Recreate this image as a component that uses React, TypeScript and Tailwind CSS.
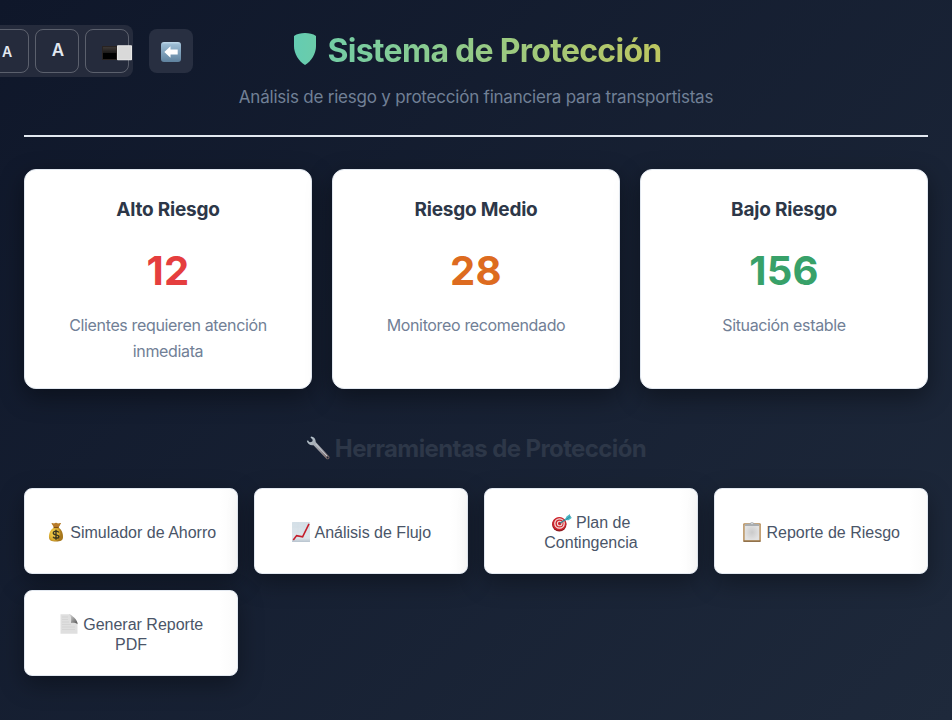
import type { ReactNode } from "react";

const SANS = "font-['Inter','Liberation_Sans',sans-serif]";

function ShieldIcon() {
  return (
    <svg className="-mt-px block h-8 w-6 shrink-0" viewBox="0 0 24 32">
      <defs>
        <linearGradient id="shield" x1="0" x2="1">
          <stop offset="0" stopColor="#64ccb2" />
          <stop offset="1" stopColor="#6bccaa" />
        </linearGradient>
      </defs>
      <path d="M1 3C4 .8 8 0 12 0s8 .8 11 3v10c0 8-5 15.500-11 19C6 28.500 1 21 1 13z" fill="url(#shield)" />
    </svg>
  );
}

function ContrastIcon() {
  return (
    <svg className="mt-[3px] ml-[16px] block h-4 w-[30px] shrink-0" viewBox="0 0 30 16">
      <defs>
        <linearGradient id="blk" x1="0" y1="0" x2="0" y2="1">
          <stop offset="0" stopColor="#3c3735" />
          <stop offset=".48" stopColor="#1c1a19" />
          <stop offset=".52" stopColor="#000" />
        </linearGradient>
      </defs>
      <rect x="0" y="1" width="15" height="14" fill="#292321" />
      <rect x="1" y="2" width="13.300" height="12" fill="url(#blk)" />
      <rect x="15" y=".3" width="15" height="15" rx=".8" fill="#eeeeed" />
      <rect x="15.600" y="1.200" width="13.800" height="13.400" fill="#d9d9d9" />
    </svg>
  );
}

function BackIcon() {
  return (
    <svg className="mt-0.5 block h-5 w-5" viewBox="0 0 20 20">
      <defs>
        <linearGradient id="back" x1="0" y1="0" x2="0" y2="1">
          <stop offset="0" stopColor="#c3dced" />
          <stop offset=".13" stopColor="#9bbbd3" />
          <stop offset="1" stopColor="#5f829e" />
        </linearGradient>
      </defs>
      <rect width="20" height="20" rx="3" fill="url(#back)" />
      <path d="M3.300 10 9.500 4.300v3.200h7.200v5H9.500v3.200z" fill="#fff" />
    </svg>
  );
}

function WrenchIcon() {
  return (
    <svg className="-mt-[3px] block h-6 w-6 shrink-0" viewBox="0 0 24 24">
      <defs>
        <linearGradient id="steel" x1="0" y1="0" x2="1" y2="1">
          <stop offset="0" stopColor="#b9cad4" />
          <stop offset=".6" stopColor="#98969d" />
          <stop offset="1" stopColor="#75625f" />
        </linearGradient>
      </defs>
      <path
        d="M5 .5C8 .8 9.900 3 9.700 6L23 20.300c1.600 1.800-.9 4-2.500 2.600L7.500 9.200C4.500 9.900 1.400 8 .8 4.800l1.400-.4c.5 1.500 1.600 2 2.900 1.700 1.500-.5 2-1.900 1.100-3.200L4.600 1.700z"
        fill="url(#steel)"
      />
      <path d="m9.500 7.800 11.700 12.400" stroke="#ccd5dc" strokeWidth=".9" />
      <circle cx="21.600" cy="21.500" r=".9" fill="#171f31" />
    </svg>
  );
}

function MoneyIcon() {
  return (
    <svg className="-my-1 inline-block h-5 w-5 align-[0px]" viewBox="0 0 20 20">
      <defs>
        <radialGradient id="bag" cx=".35" cy=".55">
          <stop offset="0" stopColor="#f6d654" />
          <stop offset=".7" stopColor="#dcae31" />
          <stop offset="1" stopColor="#a7771d" />
        </radialGradient>
      </defs>
      <path d="M5.500 1 8 1.700 10 .8l2 1 3-.8-2.500 4.500c3.500 2.200 4.800 6.500 4.500 10-.2 3-2.500 4-7 4s-6.800-1-7-4C2.800 12 4 7.700 8 5.500z" fill="url(#bag)" />
      <path d="M5.500 1 8 1.700 10 .8l2 1 3-.8-2.500 4.200H8z" fill="#b87b2a" />
      <path d="M7.600 5.500h5" stroke="#805019" strokeWidth="1.200" />
      <path d="M12.800 10.500c-.5-1-1.500-1.400-2.700-1.400-1.800 0-2.800.7-2.800 1.800 0 2.700 5.600 1.200 5.600 3.700 0 1.200-1.200 1.800-2.900 1.800-1.500 0-2.500-.6-2.900-1.600M10 7.800v10" fill="none" stroke="#393420" strokeWidth="1.400" />
    </svg>
  );
}

function ChartIcon() {
  return (
    <svg className="-my-1 mr-px ml-px inline-block h-5 w-[18px] align-[0px]" viewBox="0 0 18 20">
      <defs>
        <linearGradient id="chart" x1="0" y1="0" x2="0" y2="1">
          <stop offset="0" stopColor="#d4dfe7" />
          <stop offset=".8" stopColor="#dfe6eb" />
          <stop offset="1" stopColor="#b7c3ce" />
        </linearGradient>
      </defs>
      <rect width="18" height="20" rx=".5" fill="url(#chart)" />
      <path d="M.5 5h17M.5 10h17M.5 15h17M6 1v18M12 1v18" stroke="#ccd8e0" strokeWidth=".3" />
      <path d="m1.300 18 3.300-4.400 6 1.200L17 1.800" fill="none" stroke="#c41f2c" strokeWidth="1.600" />
    </svg>
  );
}

function TargetIcon() {
  return (
    <svg className="-mt-[2px] -mb-1 inline-block h-5 w-5 overflow-visible align-[0px]" viewBox="0 0 20 20">
      <g transform="translate(0 1.800)">
        <ellipse cx="7.300" cy="10.700" rx="7.200" ry="7" fill="#8d1b20" />
        <ellipse cx="7.300" cy="9.800" rx="7" ry="6.600" fill="#cf252e" />
        <circle cx="7.500" cy="9.700" r="4.700" fill="none" stroke="#f3dfdb" strokeWidth="1.300" />
        <circle cx="7.700" cy="9.700" r="2.300" fill="none" stroke="#f1d9d7" strokeWidth="1.100" />
        <path d="m8 9.500 8.500-5.700" stroke="#357f8e" strokeWidth="1.300" />
        <path d="m12.800 6.100 1.700-3.400L18 .2v2.700l2 1-3.500 2.500z" fill="#48b7c5" />
        <path d="m14 5.700 5-3.500" stroke="#257b8c" strokeWidth=".7" />
      </g>
    </svg>
  );
}

function ClipboardIcon() {
  return (
    <svg className="-my-1 mr-px ml-px inline-block h-5 w-[18px] align-[0px]" viewBox="0 0 18 20">
      <defs>
        <radialGradient id="sheet">
          <stop offset="0" stopColor="#cacaca" />
          <stop offset="1" stopColor="#e2e2e2" />
        </radialGradient>
      </defs>
      <rect x=".2" y="1.200" width="17.600" height="18.600" rx="1" fill="#b58b55" />
      <path d="M.4 19.200h17.200" stroke="#795a36" />
      <rect x="1.600" y="2.400" width="14.800" height="15.800" fill="url(#sheet)" />
      <path d="M2 4V2.200l5-.7C7.500-.1 10.500-.1 11 1.500l5 .7V4z" fill="#a9adb0" />
      <circle cx="9" cy="1.500" r=".7" fill="#edf0f2" />
    </svg>
  );
}

function PageIcon() {
  return (
    <svg className="-mt-[2px] mr-px -mb-1 ml-px inline-block h-5 w-[18px] align-[0px]" viewBox="0 0 18 20">
      <defs>
        <linearGradient id="fold" x1="0" y1="0" x2="1" y2="1">
          <stop offset=".2" stopColor="#c5c5c5" />
          <stop offset="1" stopColor="#4f4f4f" />
        </linearGradient>
      </defs>
      <path d="M.5.2h9L17.500 10v9.800H.5z" fill="#dfdfdf" />
      <path d="M8.800.2c3 1.500 2.500 6 2.200 8.800 2-.3 4.800-.2 6.600 1.200 0-2.400-1-4-3.500-6.600C12.500 1.900 10.800.2 8.800.2z" fill="url(#fold)" />
      <path d="M2 3h6M2 5.500h6M2 8h7M2 10.500h9M2 13h13M2 15.500h13" stroke="#cfcfcf" strokeWidth=".6" />
    </svg>
  );
}

function ToolbarButton({ children }: { children: ReactNode }) {
  return (
    <button className="flex h-11 w-11 shrink-0 items-center justify-center rounded-lg border border-white/25 font-semibold text-[#e2e8f0]">
      {children}
    </button>
  );
}

function Toolbar() {
  return (
    <div className="absolute top-[25px] left-[-19px] flex items-center gap-4">
      <div className="flex h-[52px] w-[152px] items-center gap-1.5 rounded-lg bg-[#252b3c] px-1">
        <ToolbarButton>
          <span className="text-[14px]">A</span>
        </ToolbarButton>
        <ToolbarButton>
          <span className="pl-0.5 text-[17px]">A</span>
        </ToolbarButton>
        <button className="flex h-11 w-11 shrink-0 items-center rounded-lg border border-white/25">
          <ContrastIcon />
        </button>
      </div>
      <button className="flex h-11 w-11 items-center justify-center rounded-lg bg-[#282f41]">
        <BackIcon />
      </button>
    </div>
  );
}

const risks = [
  { title: "Alto Riesgo", value: "12", text: "Clientes requieren atención inmediata", color: "text-[#e53e3e]" },
  { title: "Riesgo Medio", value: "28", text: "Monitoreo recomendado", color: "text-[#dd6b20]" },
  { title: "Bajo Riesgo", value: "156", text: "Situación estable", color: "text-[#38a169]" },
];

const tools = [
  { icon: <MoneyIcon />, label: "Simulador de Ahorro" },
  { icon: <ChartIcon />, label: "Análisis de Flujo" },
  { icon: <TargetIcon />, label: "Plan de Contingencia" },
  { icon: <ClipboardIcon />, label: "Reporte de Riesgo" },
  { icon: <PageIcon />, label: "Generar Reporte PDF" },
];

export default function App() {
  return (
    <div className={`relative h-[720px] w-[952px] overflow-hidden bg-[linear-gradient(135deg,#0f172a_0%,#1e293b_100%)] px-6 ${SANS}`}>
      <Toolbar />
      <header className="flex h-[137px] flex-col items-center border-b-2 border-[#e2e8f0] pt-[24px]">
        <div className="flex h-[51px] items-center gap-[10px] pl-[3px]">
          <ShieldIcon />
          <h1 className="bg-[linear-gradient(90deg,#73cda5,#bdc660)] bg-clip-text pt-px text-[32px] leading-[51px] font-bold tracking-[-0.72px] whitespace-nowrap text-transparent">
            Sistema de Protección
          </h1>
        </div>
        <p className="mt-2 text-[17px] leading-7 tracking-[-0.21px] whitespace-nowrap text-[#718096]">
          Análisis de riesgo y protección financiera para transportistas
        </p>
      </header>
      <section className="mt-8 grid grid-cols-3 gap-5">
        {risks.map((r) => (
          <article
            key={r.title}
            className="flex h-[220px] flex-col items-center rounded-xl border border-[#e2e8f0] bg-white px-6 pt-6 text-center shadow-[0_8px_25px_rgba(0,0,0,0.4)]"
          >
            <h3 className="text-[19px] leading-[31px] font-bold tracking-[-0.2px] text-[#2d3748]">{r.title}</h3>
            <div className={`mt-[14px] text-[40px] leading-[64px] font-bold tracking-[0.3px] ${r.color}`}>{r.value}</div>
            <p className="mt-[9px] text-base leading-[26px] tracking-[-0.35px] text-[#718096]">{r.text}</p>
          </article>
        ))}
      </section>
      <h2 className="mt-[41px] flex h-[38px] items-center justify-center gap-[5px] text-2xl font-bold tracking-[-0.6px] text-[#2d3748]">
        <WrenchIcon />
        <span>Herramientas de Protección</span>
      </h2>
      <section className="mt-[20px] grid grid-cols-4 gap-4">
        {tools.map((t) => (
          <button
            key={t.label}
            className="h-[86px] rounded-lg border border-[#e2e8f0] bg-[linear-gradient(90deg,#fff_92%,#fafafa_100%)] px-5 pt-[3px] text-center font-['Liberation_Sans',Arial,sans-serif] text-base leading-5 text-[#4a5568] shadow-[0_8px_25px_rgba(0,0,0,0.35)]"
          >
            {t.icon} {t.label}
          </button>
        ))}
      </section>
    </div>
  );
}
